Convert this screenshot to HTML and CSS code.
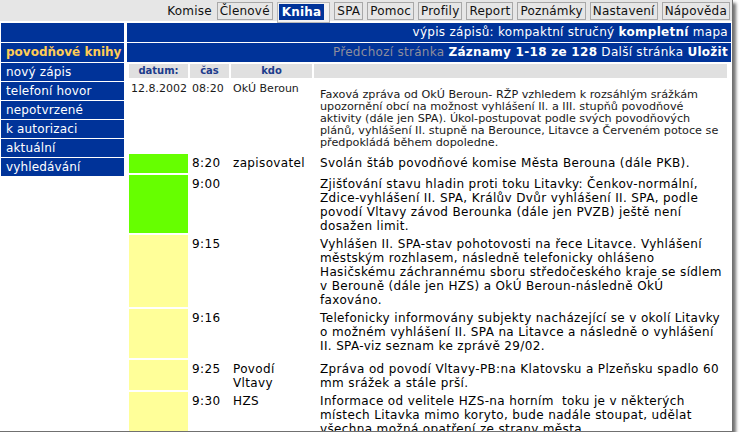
FILE: index.html
```html
<!DOCTYPE html>
<html lang="cs">
<head>
    <meta charset="UTF-8">
    <title>Povodňová kniha</title>
    <link rel="stylesheet" href="styles.css">
</head>
<body>
    <div class="window">
        <div class="topbar">
            <span class="tab plain">Komise</span>
            <a class="tab" href="#">Členové</a>
            <a class="tab active" href="#"><b>Kniha</b></a>
            <a class="tab" href="#">SPA</a>
            <a class="tab" href="#">Pomoc</a>
            <a class="tab" href="#">Profily</a>
            <a class="tab" href="#">Report</a>
            <a class="tab" href="#">Poznámky</a>
            <a class="tab" href="#">Nastavení</a>
            <a class="tab" href="#">Nápověda</a>
        </div>

        <div class="layout">
            <aside class="side">
                <div class="side-row"></div>
                <div class="side-row side-title">povodňové knihy</div>
                <ul class="menu">
                    <li><a href="#">nový zápis</a></li>
                    <li><a href="#">telefoní hovor</a></li>
                    <li><a href="#">nepotvrzené</a></li>
                    <li><a href="#">k autorizaci</a></li>
                    <li><a href="#">aktuální</a></li>
                    <li><a href="#">vyhledávání</a></li>
                </ul>
            </aside>

            <main class="main">
                <div class="bar">výpis zápisů: kompaktní stručný <b>kompletní</b> mapa</div>
                <div class="bar">
                    <span class="disabled">Předchozí stránka</span>
                    <b>Záznamy 1-18 ze 128</b> Další stránka <b>Uložit</b>
                </div>

                <table class="log">
                    <colgroup>
                        <col class="col-date">
                        <col class="col-time">
                        <col class="col-who">
                        <col>
                    </colgroup>
                    <thead>
                        <tr>
                            <th>datum:</th>
                            <th>čas</th>
                            <th>kdo</th>
                            <th></th>
                        </tr>
                    </thead>
                    <tbody>
                        <tr class="day">
                            <td>12.8.2002</td>
                            <td>08:20</td>
                            <td>OkÚ Beroun</td>
                            <td class="summary">Faxová zpráva od OkÚ Beroun- RŽP vzhledem k rozsáhlým srážkám<br>upozornění obcí na možnost vyhlášení II. a III. stupňů povodňové<br>aktivity (dále jen SPA). Úkol-postupovat podle svých povodňových<br>plánů, vyhlášení II. stupně na Berounce, Litavce a Červeném potoce se<br>předpokládá během dopoledne.</td>
                        </tr>
                        <tr class="entry loose">
                            <td class="mark green"></td>
                            <td>8:20</td>
                            <td>zapisovatel</td>
                            <td class="text">Svolán štáb povodňové komise Města Berouna (dále PKB).</td>
                        </tr>
                        <tr class="entry">
                            <td class="mark green"></td>
                            <td>9:00</td>
                            <td></td>
                            <td class="text">Zjišťování stavu hladin proti toku Litavky: Čenkov-normální,<br>Zdice-vyhlášení II. SPA, Králův Dvůr vyhlášení II. SPA, podle<br>povodí Vltavy závod Berounka (dále jen PVZB) ještě není<br>dosažen limit.</td>
                        </tr>
                        <tr class="entry">
                            <td class="mark yellow"></td>
                            <td>9:15</td>
                            <td></td>
                            <td class="text">Vyhlášen II. SPA-stav pohotovosti na řece Litavce. Vyhlášení<br>městským rozhlasem, následně telefonicky ohlášeno<br>Hasičskému záchrannému sboru středočeského kraje se sídlem<br>v Berouně (dále jen HZS) a OkÚ Beroun-následně OkÚ<br>faxováno.</td>
                        </tr>
                        <tr class="entry looser">
                            <td class="mark yellow"></td>
                            <td>9:16</td>
                            <td></td>
                            <td class="text">Telefonicky informovány subjekty nacházející se v okolí Litavky<br>o možném vyhlášení II. SPA na Litavce a následně o vyhlášení<br>II. SPA-viz seznam ke zprávě 29/02.</td>
                        </tr>
                        <tr class="entry">
                            <td class="mark yellow"></td>
                            <td>9:25</td>
                            <td>Povodí<br>Vltavy</td>
                            <td class="text">Zpráva od povodí Vltavy-PB:na Klatovsku a Plzeňsku spadlo 60<br>mm srážek a stále prší.</td>
                        </tr>
                        <tr class="entry">
                            <td class="mark yellow"></td>
                            <td>9:30</td>
                            <td>HZS</td>
                            <td class="text">Informace od velitele HZS-na horním&nbsp; toku je v některých<br>místech Litavka mimo koryto, bude nadále stoupat, udělat<br>všechna možná opatření ze strany města.</td>
                        </tr>
                    </tbody>
                </table>
            </main>
        </div>
    </div>
</body>
</html>
```

FILE: styles.css
```css
:root {
    --blue: #003399;
    --grey: #e6e6e6;
    --green: #66ff00;
    --yellow: #ffff99;
}

* {
    margin: 0;
    padding: 0;
    box-sizing: border-box;
}

body {
    font-family: "DejaVu Sans", Verdana, sans-serif;
    background: #fff;
    color: #000;
}

.window {
    width: 733px;
    height: 432px;
    overflow: hidden;
    background: #fff;
    border-right: 1px solid #707070;
    border-bottom: 1px solid #707070;
    box-shadow: 3px 3px 3px rgba(0, 0, 0, 0.55);
}

/* horni zalozky */
.topbar {
    height: 21px;
    background: var(--grey);
    display: flex;
    justify-content: flex-end;
    align-items: flex-start;
    gap: 4px;
    padding: 2px 2px 0 0;
    font-size: 12px;
    line-height: 16px;
    letter-spacing: 0.2px;
}

.tab {
    color: #111;
    text-decoration: none;
    border: 1px solid #a8a8a8;
    padding: 0 2px;
    height: 18px;
}

.tab.plain {
    border-color: transparent;
    margin-right: -2px;
}

.tab.active {
    height: 21px;
    padding: 1px 5px 0 1px;
    border-color: #b8b8b8;
    background: #f2f2f2;
    position: relative;
    z-index: 1;
}

.tab.active b {
    display: block;
    background: var(--blue);
    color: #fff;
    padding: 0 3px;
    line-height: 16px;
}

/* rozvrzeni */
.layout {
    display: grid;
    grid-template-columns: 123px 1fr;
    column-gap: 3px;
    margin-top: 2px;
    padding: 0 1px 0 1px;
}

.side {
    display: flex;
    flex-direction: column;
    gap: 1px;
}

.side-row {
    height: 19px;
    background: var(--blue);
}

.side-title {
    color: #ffcc55;
    font-weight: bold;
    font-size: 12px;
    line-height: 19px;
    padding-left: 5px;
}

.menu {
    list-style: none;
    display: flex;
    flex-direction: column;
    gap: 1px;
}

.menu a {
    display: block;
    height: 18px;
    line-height: 18px;
    background: var(--blue);
    color: #fff;
    text-decoration: none;
    font-size: 12px;
    letter-spacing: 0.15px;
    padding-left: 5px;
}

.main {
    display: flex;
    flex-direction: column;
    gap: 1px;
}

.bar {
    height: 19px;
    line-height: 19px;
    background: var(--blue);
    color: #fff;
    font-size: 12px;
    letter-spacing: 0.28px;
    text-align: right;
    padding-right: 3px;
    white-space: nowrap;
}

.bar .disabled {
    color: #8e8e9c;
}

/* tabulka zapisu */
.log {
    width: calc(100% - 2px);
    border-spacing: 2px;
    table-layout: fixed;
    margin-top: -1px;
}

.col-date { width: 59px; }
.col-time { width: 39px; }
.col-who { width: 81px; }

.log th {
    background: #e0e0e0;
    color: #1d3c8c;
    font-size: 10px;
    line-height: 14px;
    height: 14px;
    font-weight: bold;
    text-align: center;
}

.log td {
    vertical-align: top;
    padding: 2px 2px 0;
    white-space: nowrap;
}

.day td {
    font-size: 11px;
    line-height: 13px;
    color: #1a1a1a;
    padding-top: 2px;
}

.day .summary {
    font-size: 11.2px;
    line-height: 12px;
    padding: 9px 2px 3px 6px;
}

.entry td {
    font-size: 12px;
    line-height: 14px;
    letter-spacing: 0.36px;
}

.entry.loose td { padding-bottom: 3px; }
.entry.looser td { padding-bottom: 5px; }

.entry .text {
    padding-left: 6px;
}

.mark.green { background: var(--green); }
.mark.yellow { background: var(--yellow); }
```
